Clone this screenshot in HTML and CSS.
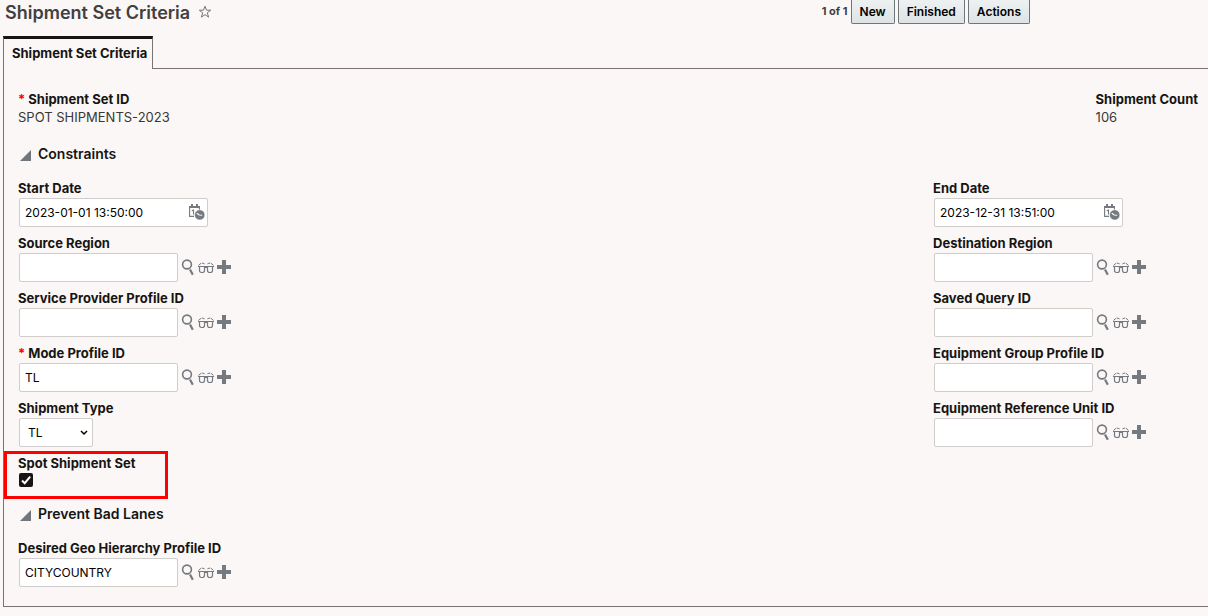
FILE: index.html
```html
<!DOCTYPE html>
<html lang="en">
<head>
<meta charset="utf-8">
<title>Shipment Set Criteria</title>
<link rel="stylesheet" href="styles.css">
</head>
<body>
<svg class="sprite" aria-hidden="true">
  <symbol id="search" viewBox="0 0 18 18"><circle cx="8" cy="5.5" r="4.4" fill="none" stroke="currentColor" stroke-width="1.6"/><path d="M11 10.4l2.8 5.4" fill="none" stroke="currentColor" stroke-width="2.2"/></symbol>
  <symbol id="glasses" viewBox="0 0 18 18"><g fill="none" stroke="currentColor"><path d="M1 7.5h16M7.5 8.5h3"/><path d="M2.5 7.5h5v3.8q0 2.2-2 2.2h-1q-2 0-2-2.2zM10.5 7.5h5v3.8q0 2.2-2 2.2h-1q-2 0-2-2.2z" stroke-width="1.2"/><path d="M1.5 6.4L4 4.3q1.4-.6 3.6.6M16.5 6.4L14 4.3q-1.4-.6-3.6.6" stroke-dasharray="3.4 .8"/></g></symbol>
  <symbol id="plus" viewBox="0 0 18 18"><path d="M7 1h4v5h5v4h-5v5H7v-5H2V6h5z" fill="currentColor"/></symbol>
  <symbol id="datetime" viewBox="0 0 18 18"><path d="M2 2h11v2H2zM4 0h2v3H4zM9 0h2v3H9z" fill="currentColor"/><path d="M2.6 3v9.4H7M12.4 3v3" fill="none" stroke="currentColor" stroke-width="1.1"/><path d="M4.8 6.8l1.7-.8v4.6" fill="none" stroke="currentColor" stroke-width="1.1"/><circle cx="12.7" cy="10.9" r="5.2" fill="currentColor" stroke="#fff" stroke-width=".6"/><path d="M9.8 9.2l2.5 1.8 2.9.3" fill="none" stroke="#fff" stroke-width="1.1"/></symbol>
</svg>

<header class="header">
  <h1 class="title">Shipment Set Criteria</h1>
  <button class="star" aria-label="Add to favorites"><svg viewBox="0 0 14 14"><path d="M7 1.2l1.5 4h4.2L9.3 7.8l1.3 4.3L7 9.6l-3.6 2.5 1.3-4.3L1.3 5.2h4.2z" fill="none" stroke="currentColor"/></svg></button>
  <div class="actions">
    <span class="count">1 of 1</span>
    <button class="action">New</button>
    <button class="action">Finished</button>
    <button class="action">Actions</button>
  </div>
</header>

<nav class="tabs"><button class="tab">Shipment Set Criteria</button></nav>

<main class="panel">
  <div class="columns summary">
    <div><div class="label"><span class="required">*</span>Shipment Set ID</div><div class="value">SPOT SHIPMENTS-2023</div></div>
    <div><div class="label">Shipment Count</div><div class="value">106</div></div>
  </div>

  <h2 class="section"><span class="disclosure"></span>Constraints</h2>
  <div class="columns">
    <div class="fields">
      <div class="field"><label class="label" for="start">Start Date</label>
        <div class="date"><input class="date-input" id="start" value="2023-01-01 13:50:00"><button class="icon" aria-label="Pick start date"><svg><use href="#datetime"/></svg></button></div></div>
      <div class="field"><label class="label" for="source">Source Region</label>
        <div class="control"><input class="text" id="source"><button class="icon" aria-label="Search"><svg><use href="#search"/></svg></button><button class="icon" aria-label="View"><svg><use href="#glasses"/></svg></button><button class="icon" aria-label="New"><svg><use href="#plus"/></svg></button></div></div>
      <div class="field"><label class="label" for="provider">Service Provider Profile ID</label>
        <div class="control"><input class="text" id="provider"><button class="icon" aria-label="Search"><svg><use href="#search"/></svg></button><button class="icon" aria-label="View"><svg><use href="#glasses"/></svg></button><button class="icon" aria-label="New"><svg><use href="#plus"/></svg></button></div></div>
      <div class="field"><label class="label" for="mode"><span class="required">*</span>Mode Profile ID</label>
        <div class="control"><input class="text" id="mode" value="TL"><button class="icon" aria-label="Search"><svg><use href="#search"/></svg></button><button class="icon" aria-label="View"><svg><use href="#glasses"/></svg></button><button class="icon" aria-label="New"><svg><use href="#plus"/></svg></button></div></div>
      <div class="field"><label class="label" for="type">Shipment Type</label>
        <div class="control select-wrap"><select class="select" id="type"><option>TL</option></select></div></div>
      <div class="field highlighted"><label class="label" for="spot">Spot Shipment Set</label>
        <input class="check" type="checkbox" id="spot" checked></div>
    </div>
    <div class="fields right">
      <div class="field"><label class="label" for="end">End Date</label>
        <div class="date"><input class="date-input" id="end" value="2023-12-31 13:51:00"><button class="icon" aria-label="Pick end date"><svg><use href="#datetime"/></svg></button></div></div>
      <div class="field"><label class="label" for="destination">Destination Region</label>
        <div class="control"><input class="text" id="destination"><button class="icon" aria-label="Search"><svg><use href="#search"/></svg></button><button class="icon" aria-label="View"><svg><use href="#glasses"/></svg></button><button class="icon" aria-label="New"><svg><use href="#plus"/></svg></button></div></div>
      <div class="field"><label class="label" for="query">Saved Query ID</label>
        <div class="control"><input class="text" id="query"><button class="icon" aria-label="Search"><svg><use href="#search"/></svg></button><button class="icon" aria-label="View"><svg><use href="#glasses"/></svg></button><button class="icon" aria-label="New"><svg><use href="#plus"/></svg></button></div></div>
      <div class="field"><label class="label" for="group">Equipment Group Profile ID</label>
        <div class="control"><input class="text" id="group"><button class="icon" aria-label="Search"><svg><use href="#search"/></svg></button><button class="icon" aria-label="View"><svg><use href="#glasses"/></svg></button><button class="icon" aria-label="New"><svg><use href="#plus"/></svg></button></div></div>
      <div class="field"><label class="label" for="unit">Equipment Reference Unit ID</label>
        <div class="control"><input class="text" id="unit"><button class="icon" aria-label="Search"><svg><use href="#search"/></svg></button><button class="icon" aria-label="View"><svg><use href="#glasses"/></svg></button><button class="icon" aria-label="New"><svg><use href="#plus"/></svg></button></div></div>
    </div>
  </div>

  <h2 class="section lanes"><span class="disclosure"></span>Prevent Bad Lanes</h2>
  <div class="field"><label class="label" for="geo">Desired Geo Hierarchy Profile ID</label>
    <div class="control"><input class="text" id="geo" value="CITYCOUNTRY"><button class="icon" aria-label="Search"><svg><use href="#search"/></svg></button><button class="icon" aria-label="View"><svg><use href="#glasses"/></svg></button><button class="icon" aria-label="New"><svg><use href="#plus"/></svg></button></div></div>
</main>
</body>
</html>
```

FILE: styles.css
```css
*, *::before, *::after { box-sizing: border-box; }
body { margin: 0; background: #fbf7f6; color: #161513; font: 13px/18px Inter, "Liberation Sans", sans-serif; }
button, input, select { font: inherit; color: #000; margin: 0; }
button { padding: 0; border: 0; background: none; }
.sprite { display: none; }

.header { display: flex; align-items: flex-start; height: 36px; padding: 0 178px 0 5px; }
.title { margin: 0; font-size: 18px; line-height: 26px; font-weight: 600; color: #42403e; white-space: nowrap; }
.star { width: 14px; height: 24px; margin-left: 8px; color: #737980; }
.star svg { display: block; width: 14px; height: 14px; margin: auto; }
.actions { display: flex; gap: 3px; margin-left: auto; }
.count { font-size: 11px; line-height: 23px; font-weight: 700; color: #42403e; }
.action { height: 24px; padding: 0 8px; border: 1px solid #70757a; border-top: 0; border-radius: 0 0 2px 2px; background: linear-gradient(#eef1f2, #dde3e5); font-size: 12px; font-weight: 600; }

.tabs { display: flex; padding-left: 3px; }
.tabs::after { content: ""; flex: 1; border-bottom: 1px solid #7a7371; }
.tab { height: 33px; padding: 0 5px 2px 8px; border: 1px solid #7a7371; border-top: 3px solid #161513; border-bottom: 0; color: #161513; font-weight: 700; }

.panel { margin: 0 0 9px 3px; padding: 21px 10px 19px 14px; border: solid #7a7371; border-width: 0 0 1px 1px; }
.columns { display: flex; justify-content: space-between; }
.label { display: block; width: fit-content; font-weight: 700; white-space: nowrap; }
.value { color: #3a3836; }
.required { margin-right: 3px; color: #f00; }
.section { display: flex; align-items: center; gap: 7px; margin: 16px 0 13px; padding-left: 2px; font-size: 14px; line-height: 24px; font-weight: 600; }
.lanes { margin-top: 7px; }
.disclosure { width: 11px; height: 11px; margin-top: 3px; background: #70767c; clip-path: polygon(100% 0, 100% 100%, 0 100%); }

.fields { display: flex; flex-direction: column; gap: 7px; }
.right { width: 265px; }
.control, .date { display: flex; align-items: center; height: 29px; margin: 1px 0 0 1px; }
.text, .select, .date { height: 29px; border: 1px solid #d0cdcb; border-radius: 2px; background: #fff; font-size: 12px; }
.text { width: 159px; padding: 0 5px; margin-right: 1px; }
.date { width: 189px; padding-right: 2px; }
.date-input { flex: 1; min-width: 0; padding: 0 5px; border: 0; background: none; }
.icon { width: 18px; height: 18px; color: #747a7f; }
.icon svg { display: block; width: 18px; height: 18px; }
.select-wrap { width: 74px; }
.select { width: 100%; padding: 0 8px; appearance: none; background: #fff url("data:image/svg+xml,%3Csvg xmlns='http://www.w3.org/2000/svg' width='8' height='6'%3E%3Cpath d='M1 1l3 3 3-3' fill='none' stroke='black' stroke-width='1.5'/%3E%3C/svg%3E") no-repeat right 4px center; }

.highlighted { position: relative; height: 41px; }
.highlighted::after { content: ""; position: absolute; inset: -3px auto auto -14px; width: 164px; height: 48px; border: 3px solid #f00; pointer-events: none; }
.check { display: block; appearance: none; width: 14px; height: 14px; margin: 1px 0 0 1px; border-radius: 2px; background: #161513 url("data:image/svg+xml,%3Csvg xmlns='http://www.w3.org/2000/svg' viewBox='0 0 14 14'%3E%3Cpath d='M3 7.5l2.7 2.7L11.2 3.6' fill='none' stroke='white' stroke-width='2'/%3E%3C/svg%3E"); }
```
